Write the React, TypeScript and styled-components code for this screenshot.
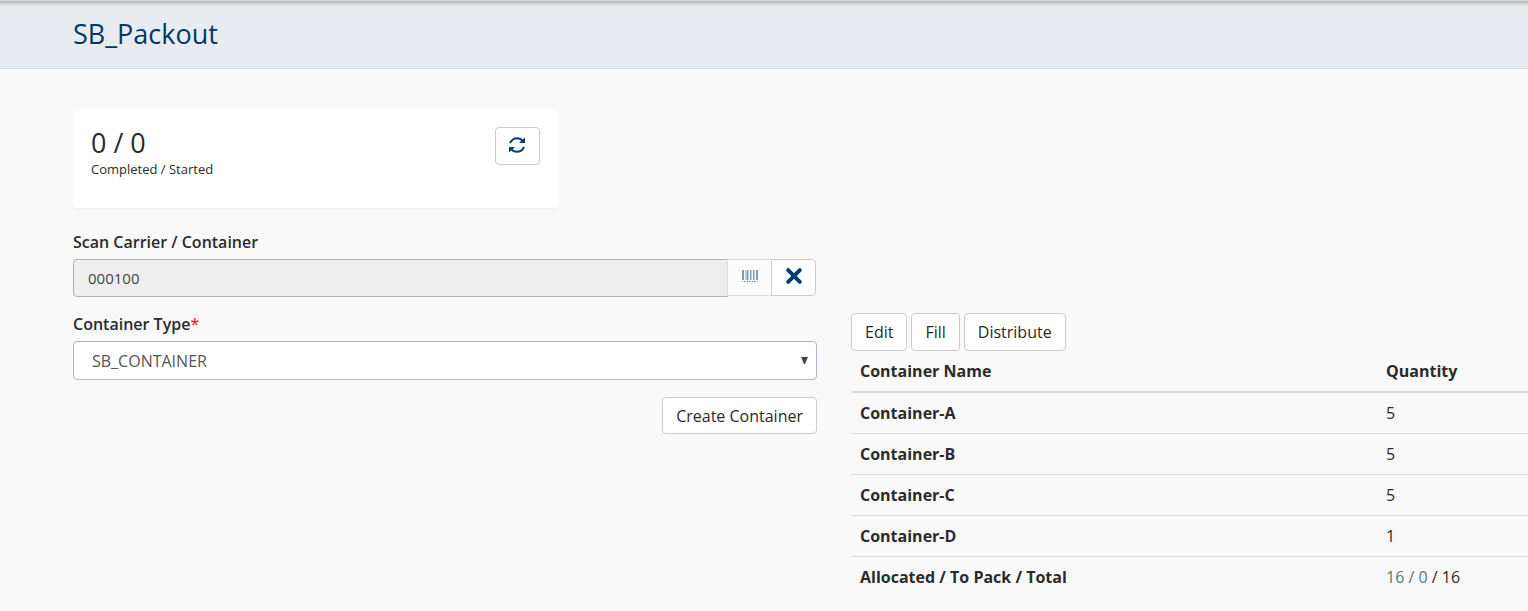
import React from "react";
import styled, { createGlobalStyle } from "styled-components";

const GlobalStyle = createGlobalStyle`
  *, *::before, *::after { box-sizing: border-box; }
  body {
    margin: 0;
    background: #f9f9f9;
    color: #2b2b2b;
    font-family: "Open Sans", "Noto Sans", sans-serif;
    font-size: 16px;
    font-weight: 400;
    line-height: 24px;
  }
  button, input, select { font: inherit; color: inherit; }
`;

const Page = styled.div`
  overflow-x: hidden;
  padding-bottom: 14px;
`;

const TitleBar = styled.header`
  height: 69px;
  padding: 14px 73px 0;
  background: linear-gradient(#f4f5f6 0, #b9bbbe 1px, #b9bcc0 2px, #d5d8dc 4px, #e8ebf0 7px);
  border-bottom: 1px solid #dadfe5;
`;

const Title = styled.h1`
  margin: 0;
  color: #003865;
  font-size: 27px;
  font-weight: 400;
  line-height: 40px;
`;

const Columns = styled.main`
  display: grid;
  grid-template-columns: 744px minmax(0, 1fr);
  column-gap: 34px;
  padding: 40px 0 0 73px;
`;

const Column = styled.section`
  min-width: 0;
`;

const TableColumn = styled(Column)`
  padding-top: 204px;
`;

const Card = styled.div`
  display: flex;
  justify-content: space-between;
  align-items: flex-start;
  width: 485px;
  height: 99px;
  margin-bottom: 22px;
  padding: 18px;
  background: #fff;
  border-radius: 4px;
  box-shadow: 0 1px 1px rgba(0, 0, 0, 0.05);
`;

const Count = styled.div`
  font-size: 27px;
  line-height: 32px;
`;

const Caption = styled.div`
  font-size: 13px;
  line-height: 20px;
`;

const Button = styled.button`
  height: 38px;
  padding: 0 13px;
  background: #fff;
  border: 1px solid #ccc;
  border-radius: 4px;
`;

const SubmitButton = styled(Button)`
  height: 37px;
  line-height: 22px;
`;

const IconButton = styled(Button)`
  display: flex;
  align-items: center;
  justify-content: center;
  width: 45px;
  padding: 0 0 2px;
  color: #003e74;
`;

const AddonButton = styled(IconButton)`
  height: 37px;
  margin-left: -1px;
  border-radius: 0;
  &:last-child { border-radius: 0 4px 4px 0; }
  &:disabled { border-color: #dedede; background: #fcfcfc; color: #003e74; }
`;

const Label = styled.label`
  display: block;
  margin-bottom: 5px;
  font-weight: 600;
`;

const Required = styled.span`
  color: #f00;
  font-weight: 400;
`;

const InputGroup = styled.div`
  display: flex;
  margin: 0 1px 15px 0;
`;

const ScanInput = styled.input`
  flex: 1;
  min-width: 0;
  height: 38px;
  padding: 0 14px;
  color: #444;
  font-size: 15px;
  background: #eee;
  border: 1px solid #b3b3b3;
  border-radius: 4px 0 0 4px;
`;

const SelectBox = styled.div`
  display: grid;
  align-items: center;
  margin-bottom: 17px;
  svg {
    grid-area: 1 / 1;
    justify-self: end;
    margin-right: 9px;
    pointer-events: none;
  }
`;

const Select = styled.select`
  grid-area: 1 / 1;
  appearance: none;
  width: 100%;
  height: 39px;
  padding: 0 18px;
  color: #555;
  background: #fff;
  border: 1px solid #a9b7c6;
  border-radius: 4px;
`;

const Actions = styled.div`
  display: flex;
  justify-content: flex-end;
`;

const Toolbar = styled.div`
  display: flex;
  gap: 4px;
`;

const Table = styled.table`
  width: 100%;
  table-layout: fixed;
  border-collapse: collapse;
  text-align: left;
  th, td { height: 41px; padding: 0 9px; border-top: 1px solid #ddd; }
  th { font-weight: 700; }
  thead th { border-top: 0; border-bottom: 2px solid #ddd; }
`;

const NameHead = styled.th`
  width: 526px;
`;

const Allocated = styled.span`
  color: #5b7b70;
`;

const RefreshIcon = () => (
  <svg width="17" height="16" viewBox="0 0 17 16" aria-hidden="true">
    <g fill="none" stroke="currentColor" strokeWidth="2">
      <path d="M1 6.2C2.4 3 5 1.2 8 1.2c2.400 0 4.300.9 5.800 2.800" />
      <path d="M15 9.800c-1.400 3.200-4 5-7 5-2.400 0-4.300-.9-5.800-2.800" />
    </g>
    <path d="M16 .4V6h-6zM0 15.600V10h6z" fill="currentColor" />
  </svg>
);

const BarcodeIcon = () => (
  <svg width="18" height="16" viewBox="0 0 18 16" fill="currentColor" shapeRendering="crispEdges" aria-hidden="true">
    <path opacity="0.5" d="M1 1h2v10h-2zM6 1h1v10h-1zM9 1h1v10h-1zM12 1h1v10h-1zM15 1h2v10h-2zM1 12h1v1h-1zM3 12h2v1h-2zM6 12h1v1h-1zM8 12h2v1h-2zM11 12h1v1h-1zM13 12h2v1h-2zM16 12h1v1h-1z" />
    <path opacity="0.25" d="M4 1h2v10h-2zM7 1h1v10h-1zM10 1h1v10h-1zM13 1h1v10h-1z" />
  </svg>
);

const CloseIcon = () => (
  <svg width="18" height="20" viewBox="0 0 18 20" fill="none" stroke="currentColor" strokeWidth="4" strokeLinecap="round" aria-hidden="true">
    <path d="M3.200 3.200l11.600 11.600M14.800 3.200L3.200 14.800" />
  </svg>
);

const Caret = () => (
  <svg width="7" height="7" viewBox="0 0 7 7" fill="#444" aria-hidden="true">
    <path d="M0 0h7L4 7H3z" />
  </svg>
);

const containers = [
  { name: "Container-A", quantity: 5 },
  { name: "Container-B", quantity: 5 },
  { name: "Container-C", quantity: 5 },
  { name: "Container-D", quantity: 1 },
];

export default function App() {
  return (
    <Page>
      <GlobalStyle />
      <TitleBar>
        <Title>SB_Packout</Title>
      </TitleBar>
      <Columns>
        <Column>
          <Card>
            <div>
              <Count>0 / 0</Count>
              <Caption>Completed / Started</Caption>
            </div>
            <IconButton type="button" aria-label="Refresh">
              <RefreshIcon />
            </IconButton>
          </Card>
          <Label htmlFor="scan">Scan Carrier / Container</Label>
          <InputGroup>
            <ScanInput id="scan" type="text" value="000100" readOnly />
            <AddonButton type="button" aria-label="Scan" disabled>
              <BarcodeIcon />
            </AddonButton>
            <AddonButton type="button" aria-label="Clear">
              <CloseIcon />
            </AddonButton>
          </InputGroup>
          <Label htmlFor="type">
            Container Type<Required>*</Required>
          </Label>
          <SelectBox>
            <Select id="type" defaultValue="SB_CONTAINER">
              <option>SB_CONTAINER</option>
            </Select>
            <Caret />
          </SelectBox>
          <Actions>
            <SubmitButton type="button">Create Container</SubmitButton>
          </Actions>
        </Column>
        <TableColumn>
          <Toolbar>
            <Button type="button">Edit</Button>
            <Button type="button">Fill</Button>
            <Button type="button">Distribute</Button>
          </Toolbar>
          <Table>
            <thead>
              <tr>
                <NameHead scope="col">Container Name</NameHead>
                <th scope="col">Quantity</th>
              </tr>
            </thead>
            <tbody>
              {containers.map(({ name, quantity }) => (
                <tr key={name}>
                  <th scope="row">{name}</th>
                  <td>{quantity}</td>
                </tr>
              ))}
              <tr>
                <th scope="row">Allocated / To Pack / Total</th>
                <td>
                  <Allocated>16 / 0</Allocated> / 16
                </td>
              </tr>
            </tbody>
          </Table>
        </TableColumn>
      </Columns>
    </Page>
  );
}
